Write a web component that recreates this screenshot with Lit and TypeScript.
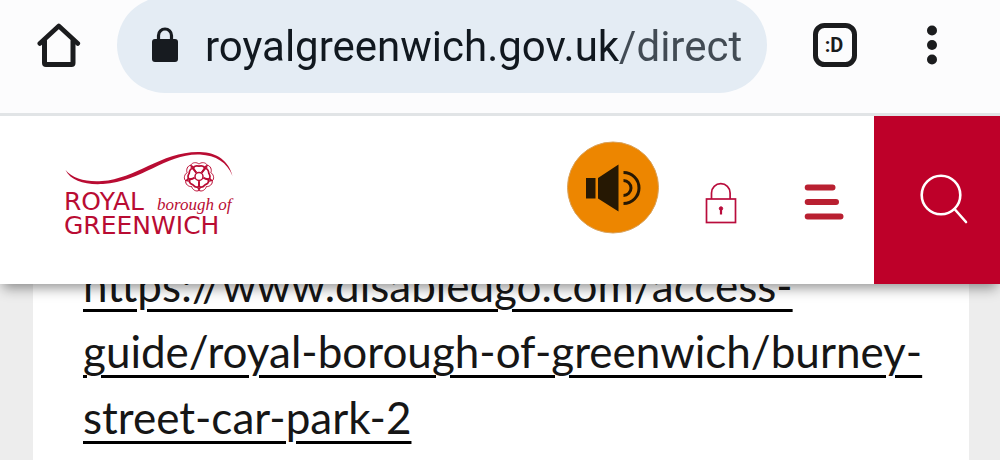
import { LitElement, html, css, svg } from "lit";
import { customElement, property } from "lit/decorators.js";

@customElement("browser-bar")
export class BrowserBar extends LitElement {
  @property() address = "";

  static styles = css`
    :host {
      display: flex;
      position: relative;
      z-index: 1;
      align-items: flex-start;
      box-sizing: border-box;
      height: 116px;
      padding: 0 57px 0 37px;
      background: #fcfcfd;
      border-bottom: 3px solid #e1e4e6;
    }
    button {
      display: flex;
      flex: none;
      padding: 0;
      border: 0;
      background: none;
      margin-top: 23px;
    }
    svg {
      display: block;
      flex: none;
    }
    .pill {
      display: flex;
      flex: 1;
      min-width: 0;
      align-items: center;
      gap: 26px;
      box-sizing: border-box;
      height: 96px;
      margin: -3px 46px 0 36px;
      padding: 0 12px 0 34px;
      border-radius: 48px;
      background: #e4ecf4;
    }
    .address {
      flex: 1;
      min-width: 0;
      height: 60px;
      padding: 2px 0 0;
      border: 0;
      outline: 0;
      font: 42px Roboto, sans-serif;
      color: transparent;
      background: linear-gradient(90deg, #11181f 415px, #424b54 415px);
      -webkit-background-clip: text;
      background-clip: text;
    }
    .menu {
      margin-left: 64px;
    }
    .tabs text {
      font: bold 20px Roboto, sans-serif;
    }
  `;

  render() {
    return html`
      <button aria-label="Home">
        <svg width="44" height="44" viewBox="0 0 44 44" fill="none" stroke="#1b1c1e" stroke-width="5" stroke-linejoin="round" stroke-linecap="round">
          <path d="M2.800 20.500 21.800 3 40.800 20.500" stroke-width="4.600" />
          <path d="M7.500 18v22q0 1.500 1.500 1.500h25.500q1.500 0 1.500-1.500V18" />
        </svg>
      </button>
      <div class="pill">
        <svg width="28" height="36" viewBox="0 0 28 36">
          <rect x="1" y="12" width="26" height="23" rx="3" fill="#171b20" />
          <path d="M7.500 14V8.500a6.500 6.500 0 0 1 13 0V14" fill="none" stroke="#171b20" stroke-width="3.200" />
        </svg>
        <input class="address" type="text" aria-label="Address" .value=${this.address} />
      </div>
      <button class="tabs" aria-label="Tabs">
        <svg width="44" height="44" viewBox="0 0 44 44">
          <rect x="2.500" y="2.500" width="39" height="39" rx="9" fill="none" stroke="#1b1c1e" stroke-width="5" />
          <text x="21" y="29" text-anchor="middle" fill="#1b1c1e">:D</text>
        </svg>
      </button>
      <button class="menu" aria-label="Menu">
        <svg width="22" height="44" viewBox="0 0 22 44" fill="#1b1c1e">
          <circle cx="11" cy="7.500" r="5" />
          <circle cx="11" cy="22" r="5" />
          <circle cx="11" cy="36.500" r="5" />
        </svg>
      </button>
    `;
  }
}

@customElement("site-header")
export class SiteHeader extends LitElement {
  static styles = css`
    :host {
      display: flex;
      align-items: stretch;
      height: 168px;
      padding-left: 64px;
      background: #fff;
      box-shadow: 0 7px 12px -3px rgba(0, 0, 0, 0.42);
    }
    svg {
      display: block;
    }
    .logo {
      margin: 34px auto 0 0;
    }
    .sans {
      font: 25px "DejaVu Sans", sans-serif;
    }
    .serif {
      font: italic 17px "Liberation Serif", serif;
    }
    button {
      display: flex;
      justify-content: center;
      align-items: flex-start;
      padding: 0;
      border: 0;
      background: none;
    }
    .listen {
      margin: 25px 45px 0 0;
    }
    .account {
      margin: 65px 67px 0 0;
    }
    .nav {
      margin: 67px 30px 0 0;
    }
    .search {
      width: 126px;
      padding: 57px 0 0 14px;
      background: #be0029;
    }
  `;

  private rose() {
    const turns = [0, 72, 144, 216, 288];
    return svg`
      <g transform="translate(135 26.500)" fill="none" stroke="#b90c33">
        ${turns.map((a) => svg`<path transform=${`rotate(${a})`} d="M-8.300-11C-7-14.500-2-14.500 0-12.400 2-14.500 7-14.500 8.300-11" stroke-width="0.900" />`)}
        ${turns.map((a) => svg`<path transform=${`rotate(${a})`} d="M-2.500-4C-8-8-5-11.500 0-10.300 5-11.500 8-8 2.500-4" stroke-width="1.700" />`)}
        ${turns.map((a) => svg`<path transform=${`rotate(${a + 36})`} d="M0-8V-13M-1.500-11 0-13.500 1.500-11" stroke-width="1.100" />`)}
        <circle r="4" stroke-width="1.500" />
      </g>
    `;
  }

  render() {
    return html`
      <a class="logo" href="#" aria-label="Royal borough of Greenwich">
        <svg width="172" height="96" viewBox="0 0 172 96" fill="#b90c33">
          <path d="M1.500 20C9 29 22 32 38 31 72 29 98 1 136 2c17 .5 29 9 32.500 24C163 12 152 5.500 136 4.500 103 3 79 31 39 34 21 35 7 31 1.500 20Z" />
          ${this.rose()}
          <text class="sans" x="0" y="60">ROYAL</text>
          <text class="serif" x="93" y="60">borough of</text>
          <text class="sans" x="0" y="84">GREENWICH</text>
        </svg>
      </a>
      <button class="listen" aria-label="Listen">
        <svg width="94" height="94" viewBox="0 0 94 94">
          <circle cx="47" cy="46.500" r="45.500" fill="#ed8600" stroke="#d9a25c" />
          <path d="M20 37H29.500v20.500H20ZM32 37 52.500 23.500V70.500L32 57.500Z" fill="#261803" />
          <path d="M57.500 39.500a7.500 7.500 0 0 1 0 15M57.500 31.500a15.500 15.500 0 0 1 0 31" fill="none" stroke="#261803" stroke-width="3" />
        </svg>
      </button>
      <button class="account" aria-label="Account">
        <svg width="32" height="44" viewBox="0 0 32 44" fill="none" stroke="#b90c3c" stroke-width="1.700">
          <rect x="1.500" y="18" width="29" height="23.500" />
          <path d="M6.500 18v-6a9.300 9.300 0 0 1 18.600 0v6" />
          <circle cx="16" cy="27.500" r="1.700" fill="#b90c3c" stroke-width="1" />
          <path d="M16 28v5.500" stroke-width="2.200" />
        </svg>
      </button>
      <button class="nav" aria-label="Site menu">
        <svg width="40" height="38" viewBox="0 0 40 38" stroke="#b92031" stroke-width="6" stroke-linecap="round">
          <path d="M3.700 4.500H28.500M3.700 19H32M3.700 33.500H36.500" />
        </svg>
      </button>
      <button class="search" aria-label="Search">
        <svg width="50" height="52" viewBox="0 0 50 52" fill="none" stroke="#fff" stroke-width="2.600">
          <circle cx="22" cy="22" r="19.300" />
          <path d="M35.500 36 47 49" stroke-linecap="round" />
        </svg>
      </button>
    `;
  }
}

@customElement("app-root")
export class AppRoot extends LitElement {
  static styles = css`
    :host {
      display: flex;
      flex-direction: column;
      min-height: 100vh;
      overflow: hidden;
      background: #ededed;
    }
    header {
      position: sticky;
      top: 0;
      z-index: 1;
    }
    main {
      flex: 1;
      margin: -32px 31px 0 33px;
      padding: 0 32px 0 50px;
      background: #fff;
    }
    p {
      margin: 0;
      font: 44px/66px Lato, sans-serif;
    }
    a {
      color: #161616;
      text-decoration: underline;
      text-decoration-color: #000;
      text-decoration-thickness: 3px;
      text-underline-offset: 7px;
    }
  `;

  render() {
    return html`
      <header>
        <browser-bar address="royalgreenwich.gov.uk/direct"></browser-bar>
        <site-header></site-header>
      </header>
      <main>
        <p>
          <a href="#">https://www.disabledgo.com/access-<wbr />guide/royal-borough-of-greenwich/burney-<wbr />street-car-park-2</a>
        </p>
      </main>
    `;
  }
}
